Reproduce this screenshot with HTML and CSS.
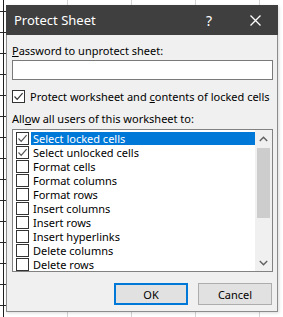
FILE: index.html
```html
<!DOCTYPE html>
<html lang="en">
<head>
    <meta charset="UTF-8">
    <title>Protect Sheet</title>
    <link rel="stylesheet" href="styles.css">
</head>
<body>
    <div class="dialog">
        <div class="titlebar">
            <span class="title">Protect Sheet</span>
            <span class="tb-btn help">?</span>
            <span class="tb-btn close">
                <svg width="11" height="11" viewBox="0 0 11 11"><path d="M0.5 0.5 L10.5 10.5 M10.5 0.5 L0.5 10.5" stroke="#ffffff" stroke-width="1.3" fill="none"/></svg>
            </span>
        </div>

        <div class="content">
            <div class="label"><u>P</u>assword to unprotect sheet:</div>
            <div class="input"></div>

            <div class="check-row">
                <span class="box">
                    <svg width="11" height="11" viewBox="0 0 11 11"><path d="M1.5 5.5 L4.2 8.3 L9.6 2.2" stroke="#333333" stroke-width="1.2" fill="none"/></svg>
                </span>
                <span>Protect worksheet and <u>c</u>ontents of locked cells</span>
            </div>

            <div class="label allow">All<u>o</u>w all users of this worksheet to:</div>

            <div class="listbox">
                <div class="items">
                    <div class="item selected"><span class="box"><svg width="11" height="11" viewBox="0 0 11 11"><path d="M1.5 5.5 L4.2 8.3 L9.6 2.2" stroke="#555555" stroke-width="1.2" fill="none"/></svg></span><span class="item-text">Select locked cells</span></div>
                    <div class="item"><span class="box"><svg width="11" height="11" viewBox="0 0 11 11"><path d="M1.5 5.5 L4.2 8.3 L9.6 2.2" stroke="#555555" stroke-width="1.2" fill="none"/></svg></span><span class="item-text">Select unlocked cells</span></div>
                    <div class="item"><span class="box"></span><span class="item-text">Format cells</span></div>
                    <div class="item"><span class="box"></span><span class="item-text">Format columns</span></div>
                    <div class="item"><span class="box"></span><span class="item-text">Format rows</span></div>
                    <div class="item"><span class="box"></span><span class="item-text">Insert columns</span></div>
                    <div class="item"><span class="box"></span><span class="item-text">Insert rows</span></div>
                    <div class="item"><span class="box"></span><span class="item-text">Insert hyperlinks</span></div>
                    <div class="item"><span class="box"></span><span class="item-text">Delete columns</span></div>
                    <div class="item"><span class="box"></span><span class="item-text">Delete rows</span></div>
                </div>
                <div class="scrollbar">
                    <div class="arrow">
                        <svg width="9" height="6" viewBox="0 0 9 6"><path d="M0.8 5 L4.5 1.3 L8.2 5" stroke="#606060" stroke-width="1.4" fill="none"/></svg>
                    </div>
                    <div class="track"><div class="thumb"></div></div>
                    <div class="arrow">
                        <svg width="9" height="6" viewBox="0 0 9 6"><path d="M0.8 1 L4.5 4.7 L8.2 1" stroke="#606060" stroke-width="1.4" fill="none"/></svg>
                    </div>
                </div>
            </div>

            <div class="buttons">
                <button class="btn default">OK</button>
                <button class="btn">Cancel</button>
            </div>
        </div>
    </div>
</body>
</html>
```

FILE: styles.css
```css
html, body {
    height: 100%;
}
body {
    margin: 0;
    overflow: hidden;
    font-family: 'Segoe UI', 'Noto Sans', sans-serif;
    font-size: 11px;
    color: #000000;
    background:
        linear-gradient(#1e1e1e, #1e1e1e) 3px 0 / 1px 100% no-repeat,
        repeating-linear-gradient(transparent 0 11px, #2a2a2a 11px 12px, transparent 12px 21px) 0 0 / 6px 100% no-repeat,
        repeating-linear-gradient(90deg, #d4d4d4 0 1px, transparent 1px 64px) 3px 0,
        #ffffff;
}
.dialog {
    width: 272px;
    height: 307px;
    margin: 5px 0 0 6px;
    box-sizing: border-box;
    background: #f0f0f0;
    border: 1px solid #8c8c8c;
    border-top: none;
    box-shadow: 1px 1px 3px rgba(0, 0, 0, 0.15);
}
.titlebar {
    height: 30px;
    margin: 0 -1px;
    background: #3f3f3f;
    color: #ffffff;
    display: flex;
    align-items: center;
}
.title {
    flex: 1;
    padding-left: 8px;
    font-size: 13px;
}
.tb-btn {
    width: 46px;
    height: 30px;
    display: flex;
    align-items: center;
    justify-content: center;
    font-size: 14px;
}
.content {
    padding: 0 4px 0 5px;
}
.label {
    height: 16px;
    line-height: 16px;
    margin-top: 8px;
    white-space: nowrap;
}
.input {
    height: 20px;
    margin-top: 1px;
    box-sizing: border-box;
    background: #ffffff;
    border: 1px solid #7a7a7a;
}
.check-row {
    display: flex;
    align-items: center;
    height: 16px;
    margin-top: 8px;
    white-space: nowrap;
}
.box {
    width: 13px;
    height: 13px;
    box-sizing: border-box;
    border: 1px solid #333333;
    background: #ffffff;
    display: flex;
    align-items: center;
    justify-content: center;
    flex-shrink: 0;
}
.check-row .box {
    margin-right: 5px;
}
.label.allow {
    margin-top: 7px;
}
.listbox {
    display: flex;
    height: 143px;
    margin-top: 2px;
    box-sizing: border-box;
    background: #ffffff;
    border: 1px solid #828282;
    overflow: hidden;
}
.items {
    flex: 1;
    padding: 1px 0 0 3px;
}
.item {
    display: flex;
    align-items: center;
    height: 14px;
    white-space: nowrap;
}
.item .box {
    margin-right: 2px;
}
.item-text {
    flex: 1;
    height: 13px;
    line-height: 13px;
    padding-left: 2px;
}
.item.selected .item-text {
    background: #0078d7;
    color: #ffffff;
}
.scrollbar {
    width: 17px;
    display: flex;
    flex-direction: column;
    background: #f0f0f0;
}
.arrow {
    height: 17px;
    display: flex;
    align-items: center;
    justify-content: center;
}
.track {
    flex: 1;
    padding: 1px 2px 0;
}
.thumb {
    height: 70px;
    background: #cdcdcd;
}
.buttons {
    display: flex;
    justify-content: flex-end;
    gap: 10px;
    margin-top: 11px;
    padding-right: 1px;
}
.btn {
    width: 74px;
    height: 22px;
    box-sizing: border-box;
    background: #e1e1e1;
    border: 1px solid #adadad;
    font-family: 'Segoe UI', 'Noto Sans', sans-serif;
    font-size: 11px;
    color: #000000;
    padding: 0;
}
.btn.default {
    border: 2px solid #0078d7;
}
```
